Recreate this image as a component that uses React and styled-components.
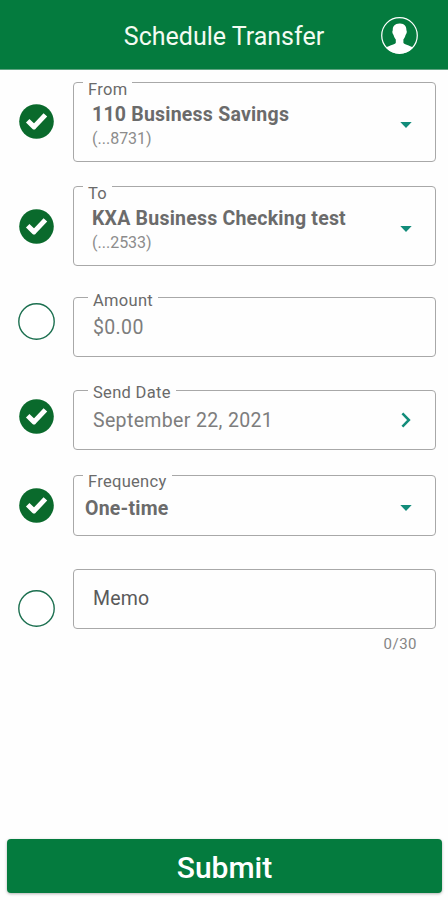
import React, { useState } from "react";
import styled, { createGlobalStyle } from "styled-components";

const fields = [
  {
    id: "from",
    label: "From",
    labelLeft: 9,
    labelTop: -3,
    value: "110 Business Savings",
    detail: "(...8731)",
    icon: "caret",
    bold: true,
    done: true,
    inset: 18,
    nudge: 7,
    height: 80,
    gap: 0,
    badgeTop: 22,
  },
  {
    id: "to",
    label: "To",
    labelLeft: 9,
    labelTop: -3,
    value: "KXA Business Checking test",
    detail: "(...2533)",
    icon: "caret",
    bold: true,
    done: true,
    inset: 18,
    nudge: 7,
    height: 80,
    gap: 24,
    badgeTop: 23,
  },
  {
    id: "amount",
    label: "Amount",
    labelLeft: 14,
    labelTop: -7,
    value: "$0.00",
    done: false,
    nudge: 1,
    height: 60,
    gap: 31,
    badgeTop: 6,
  },
  {
    id: "date",
    label: "Send Date",
    labelLeft: 14,
    labelTop: -8,
    value: "September 22, 2021",
    icon: "chevron",
    done: true,
    nudge: 1,
    height: 60,
    gap: 33,
    badgeTop: 9,
  },
  {
    id: "frequency",
    label: "Frequency",
    labelLeft: 9,
    labelTop: -4,
    value: "One-time",
    icon: "caret",
    bold: true,
    done: true,
    inset: 11,
    nudge: 6,
    height: 61,
    gap: 25,
    badgeTop: 13,
  },
];

function CheckBadge() {
  return (
    <svg width="35" height="35" viewBox="0 0 35 35">
      <circle cx="17.5" cy="17.5" r="17.3" fill="#0a6a2c" />
      <path
        d="M8.7 16.8 L15 22.9 L26.4 10.9"
        fill="none"
        stroke="#fff"
        strokeWidth="5"
        strokeLinejoin="round"
      />
    </svg>
  );
}

function EmptyBadge() {
  return (
    <svg width="37" height="37" viewBox="0 0 37 37">
      <circle
        cx="18.5"
        cy="18.5"
        r="17.7"
        fill="#fff"
        stroke="#1b6f4f"
        strokeWidth="1.4"
      />
    </svg>
  );
}

function Caret() {
  return (
    <svg width="12" height="6" viewBox="0 0 12 6">
      <path d="M0.3 0 H11.7 L6 6 Z" fill="#128c7a" />
    </svg>
  );
}

function Chevron() {
  return (
    <svg width="12" height="16" viewBox="0 0 12 16">
      <path
        d="M2.4 1.4 L8.9 8 L2.4 14.6"
        fill="none"
        stroke="#128c7a"
        strokeWidth="2.5"
      />
    </svg>
  );
}

function Avatar() {
  return (
    <svg width="37" height="37" viewBox="0 0 36 36">
      <circle cx="18" cy="18" r="17.3" fill="none" stroke="#fff" strokeWidth="1.2" />
      <path
        d="M18 6.3 C22.6 6 25 9 24.7 13 C25.5 13.6 25.1 16.6 23.9 17.4 C23.5 19.5 22.3 20.8 21.8 21.8 V25 C22.6 26.8 28 27.5 31 29.8 C27.8 33.4 23.3 35.4 18 35.4 C12.7 35.4 8.2 33.4 5 29.8 C8 27.5 13.6 26.8 14.4 25 V21.8 C13.8 20.8 12.7 19.5 12.2 17.4 C11 16.6 10.7 13.6 11.5 13 C11.2 9 13.4 6.4 18 6.3 Z"
        fill="#fff"
      />
    </svg>
  );
}

function Field({ field }) {
  return (
    <Row $gap={field.gap}>
      <Badge $top={field.badgeTop}>
        {field.done ? <CheckBadge /> : <EmptyBadge />}
      </Badge>
      <Box $height={field.height} $inset={field.inset}>
        <Label $left={field.labelLeft} $top={field.labelTop}>
          {field.label}
        </Label>
        <Texts $nudge={field.nudge}>
          <Value $bold={field.bold}>{field.value}</Value>
          {field.detail && <Detail>{field.detail}</Detail>}
        </Texts>
        {field.icon && (
          <Action $nudge={field.icon === "caret" ? 5 : 0}>
            {field.icon === "caret" ? <Caret /> : <Chevron />}
          </Action>
        )}
      </Box>
    </Row>
  );
}

function App() {
  const [memo, setMemo] = useState("");

  return (
    <Page>
      <GlobalStyle />
      <Header>
        <Title>Schedule Transfer</Title>
        <Avatar />
      </Header>
      <Form>
        {fields.map((field) => (
          <Field key={field.id} field={field} />
        ))}
        <Row $gap={33}>
          <Badge $top={21}>
            <EmptyBadge />
          </Badge>
          <Box $height={60}>
            <MemoInput
              placeholder="Memo"
              maxLength={30}
              value={memo}
              onChange={(e) => setMemo(e.target.value)}
            />
          </Box>
        </Row>
        <Counter>{memo.length}/30</Counter>
      </Form>
      <Submit>Submit</Submit>
    </Page>
  );
}

const GlobalStyle = createGlobalStyle`
  * {
    box-sizing: border-box;
  }

  body {
    margin: 0;
    background: #fff;
    font-family: Roboto, "Liberation Sans", sans-serif;
  }

  svg {
    display: block;
    flex-shrink: 0;
  }
`;

const Page = styled.div`
  display: flex;
  flex-direction: column;
  height: 900px;
  background: #fefefe;
`;

const Header = styled.header`
  display: grid;
  grid-template-columns: 68px 1fr 68px;
  align-items: center;
  height: 70px;
  padding-top: 3px;
  background: #047b3e;
  border-bottom: 1px solid #5fa481;

  svg {
    grid-column: 3;
    margin: 0 0 2px 1px;
  }
`;

const Title = styled.h1`
  grid-column: 2;
  margin: 0;
  color: #f4fbf2;
  font-size: 25px;
  font-weight: 400;
  text-align: center;
  white-space: nowrap;
`;

const Form = styled.main`
  flex: 1;
  padding: 12px 12px 0 0;
`;

const Row = styled.div`
  display: grid;
  grid-template-columns: 73px 1fr;
  margin-top: ${(props) => props.$gap}px;
`;

const Badge = styled.div`
  display: flex;
  justify-content: center;
  padding-top: ${(props) => props.$top}px;
`;

const Box = styled.div`
  position: relative;
  display: flex;
  align-items: center;
  justify-content: space-between;
  height: ${(props) => props.$height}px;
  padding: 0 23px 0 ${(props) => props.$inset || 19}px;
  border: 1.5px solid #a8a8a8;
  border-radius: 4px;
`;

const Label = styled.span`
  position: absolute;
  top: ${(props) => props.$top}px;
  left: ${(props) => props.$left}px;
  padding: 0 5px;
  background: #fefefe;
  color: #6a6a6a;
  font-size: 16.5px;
  line-height: 20px;
  letter-spacing: 0.3px;
`;

const Texts = styled.div`
  display: flex;
  flex-direction: column;
  padding-top: ${(props) => props.$nudge}px;
`;

const Action = styled.div`
  padding-top: ${(props) => props.$nudge}px;
`;

const Value = styled.span`
  color: ${(props) => (props.$bold ? "#6b6b6b" : "#7d7d7d")};
  font-size: 19.5px;
  font-weight: ${(props) => (props.$bold ? 700 : 400)};
  line-height: 26px;
  letter-spacing: ${(props) => (props.$bold ? 0.22 : 0.35)}px;
`;

const Detail = styled.span`
  color: #8c8c8c;
  font-size: 16px;
  line-height: 22px;
`;

const MemoInput = styled.input`
  width: 100%;
  padding: 0 0 2px;
  border: 0;
  outline: 0;
  background: transparent;
  font: 400 19.5px Roboto, sans-serif;
  letter-spacing: 0.2px;

  &::placeholder {
    color: #5a5a5a;
    opacity: 1;
  }
`;

const Counter = styled.div`
  padding: 5px 19px 0 0;
  color: #858585;
  font-size: 15px;
  line-height: 20px;
  letter-spacing: 0.5px;
  text-align: right;
`;

const Submit = styled.button`
  height: 54px;
  margin: 0 6px 7px 7px;
  padding-top: 3px;
  border: 0;
  border-radius: 4px;
  background: #047b3e;
  box-shadow: 0 1px 3px rgba(0, 0, 0, 0.3);
  color: #fff;
  font: 500 30px Roboto, sans-serif;
`;

export default App;
